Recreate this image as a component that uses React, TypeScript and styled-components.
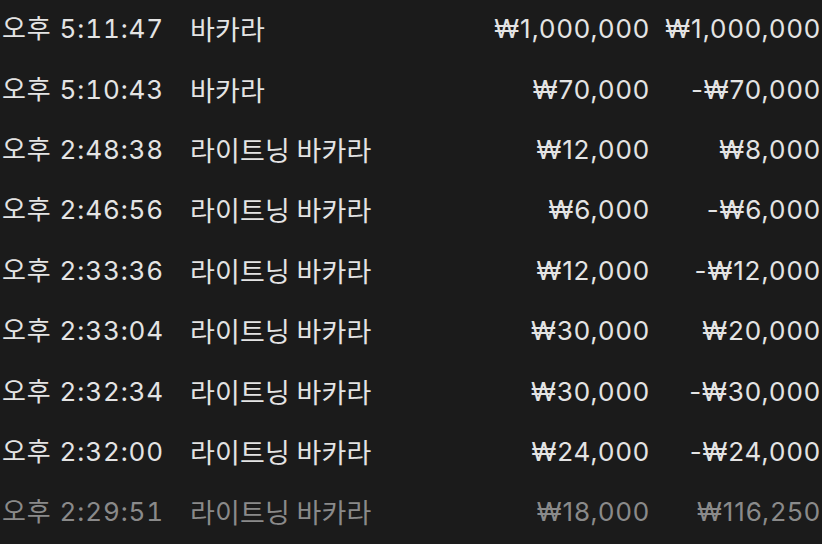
import React from "react";
import styled, { createGlobalStyle } from "styled-components";

const GlobalStyle = createGlobalStyle`
  html, body {
    margin: 0;
    padding: 0;
    background: #1b1b1b;
  }

  body {
    font-family: Inter, "Noto Sans CJK KR", sans-serif;
    -webkit-font-smoothing: antialiased;
  }
`;

const HistoryList = styled.div`
  width: 822px;
  height: 544px;
  overflow: hidden;

  display: flex;
  flex-direction: column;

  margin-top: -1px;
  padding: 0 1px 0 2px;
  box-sizing: border-box;
`;

const HistoryRow = styled.div<{ $faded?: boolean }>`
  height: 60.4px;
  flex-shrink: 0;

  display: grid;
  grid-template-columns: 188px 1fr 171px 171px;
  align-items: center;

  font-family: Inter, "Noto Sans CJK KR", sans-serif;
  font-size: 26px;
  line-height: 32px;
  letter-spacing: 0.9px;
  color: ${(props) => (props.$faded ? "#8a8a8a" : "#e4e4e4")};
`;

const Cell = styled.span<{ $right?: boolean }>`
  white-space: nowrap;
  text-align: ${(props) => (props.$right ? "right" : "left")};
`;

const TimeText = styled(Cell)`
  font-variant-numeric: tabular-nums;
  letter-spacing: 0.9px;
`;

const GameName = styled.span`
  font-family: "Noto Sans CJK KR", sans-serif;
  font-size: 27px;
  letter-spacing: 0.2px;
  white-space: nowrap;
`;

const history = [
  { time: "오후 5:11:47", game: "바카라", bet: "₩1,000,000", net: "₩1,000,000" },
  { time: "오후 5:10:43", game: "바카라", bet: "₩70,000", net: "-₩70,000" },
  { time: "오후 2:48:38", game: "라이트닝 바카라", bet: "₩12,000", net: "₩8,000" },
  { time: "오후 2:46:56", game: "라이트닝 바카라", bet: "₩6,000", net: "-₩6,000" },
  { time: "오후 2:33:36", game: "라이트닝 바카라", bet: "₩12,000", net: "-₩12,000" },
  { time: "오후 2:33:04", game: "라이트닝 바카라", bet: "₩30,000", net: "₩20,000" },
  { time: "오후 2:32:34", game: "라이트닝 바카라", bet: "₩30,000", net: "-₩30,000" },
  { time: "오후 2:32:00", game: "라이트닝 바카라", bet: "₩24,000", net: "-₩24,000" },
  { time: "오후 2:29:51", game: "라이트닝 바카라", bet: "₩18,000", net: "₩116,250" },
];

const App: React.FC = () => {
  return (
    <>
      <GlobalStyle />
      <HistoryList>
        {history.map((item, i) => (
          <HistoryRow key={item.time} $faded={i === history.length - 1}>
            <TimeText>{item.time}</TimeText>
            <GameName>{item.game}</GameName>
            <Cell $right>{item.bet}</Cell>
            <Cell $right>{item.net}</Cell>
          </HistoryRow>
        ))}
      </HistoryList>
    </>
  );
};

export default App;
